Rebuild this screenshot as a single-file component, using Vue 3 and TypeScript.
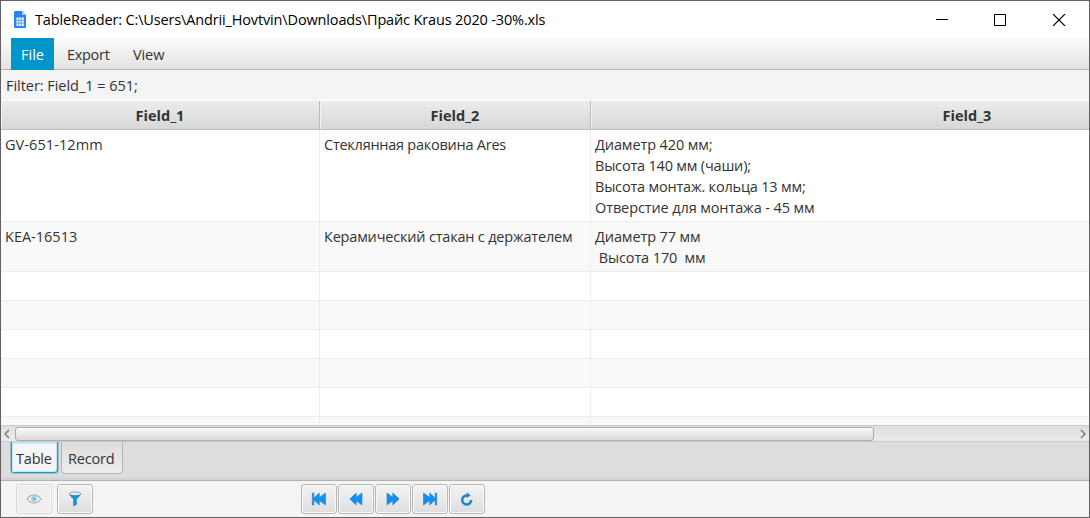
<script setup lang="ts">
interface Cell { lines: string[]; tracking: string[] }
interface Row { height: number; cells: Cell[] }

const columns = ['Field_1', 'Field_2', 'Field_3']
const cell = (lines: string[] = [], tracking: string[] = []): Cell => ({ lines, tracking })

const rows: Row[] = [
  {
    height: 92,
    cells: [
      cell(['GV-651-12mm'], ['loose']),
      cell(['Стеклянная раковина Ares'], ['tightest']),
      cell(
        ['Диаметр 420 мм;', 'Высота 140 мм (чаши);', 'Высота монтаж. кольца 13 мм;', 'Отверстие для монтажа - 45 мм'],
        ['tight', 'tighter', 'tighter', 'tight'],
      ),
    ],
  },
  {
    height: 50,
    cells: [
      cell(['KEA-16513'], ['']),
      cell(['Керамический стакан с держателем'], ['tighter']),
      cell(['Диаметр 77 мм', ' Высота 170  мм'], ['tight', 'tight']),
    ],
  },
  ...Array.from({ length: 6 }, () => ({ height: 29, cells: [cell(), cell(), cell()] })),
]

const navigation = ['first', 'previous', 'next', 'last', 'reload']
</script>

<template>
  <div class="window">
    <header class="titlebar">
      <svg class="doc" width="12" height="17" viewBox="0 0 12 17">
        <path d="M1.2 0H8L12 4V15.8Q12 17 10.8 17H1.2Q0 17 0 15.8V1.2Q0 0 1.2 0Z" fill="#2684f8" />
        <path d="M8 0L12 4H8Z" fill="#a9cdfb" />
        <path d="M2.5 6.5H9.8V15H2.5Z" fill="#fff" />
        <path d="M2.5 9.3H9.8M2.5 12.1H9.8M4.8 6.5V15M7.3 6.5V15" stroke="#2684f8" stroke-width=".7" />
      </svg>
      <span class="title">TableReader: C:\Users\Andrii_Hovtvin\Downloads\Прайс Kraus 2020 -30%.xls</span>
      <svg class="controls" width="130" height="12" viewBox="0 0 130 12" fill="none" stroke="#000">
        <path d="M0 5.5H12" />
        <path d="M58.5.5H69.5V11.5H58.5Z" />
        <path d="M117 0L129 12M129 0L117 12" stroke-width="1.1" />
      </svg>
    </header>

    <nav class="menubar">
      <span class="menu active">File</span>
      <span class="menu export">Export</span>
      <span class="menu view">View</span>
    </nav>
    <div class="filter"><span>Filter: Field_1 = 651;</span></div>

    <section class="table">
      <div class="grid head">
        <div v-for="name in columns" :key="name" class="th"><span>{{ name }}</span></div>
      </div>
      <div v-for="(row, r) in rows" :key="r" class="grid row" :style="{ height: row.height + 'px' }">
        <div v-for="(c, i) in row.cells" :key="i" class="td">
          <div v-for="(line, l) in c.lines" :key="l" class="line"><span :class="c.tracking[l]">{{ line }}</span></div>
        </div>
      </div>
    </section>

    <div class="scrollbar">
      <svg width="14" height="16" viewBox="0 0 14 16"><path d="M8 4L4 8L8 12" fill="none" stroke="#777" stroke-width="1.4" /></svg>
      <div class="thumb"></div>
      <svg class="right" width="14" height="16" viewBox="0 0 14 16"><path d="M6 4L10 8L6 12" fill="none" stroke="#777" stroke-width="1.4" /></svg>
    </div>

    <div class="tabs">
      <div class="tab selected"><span>Table</span></div>
      <div class="tab"><span>Record</span></div>
    </div>

    <footer class="toolbar">
      <button class="tool disabled">
        <svg width="16" height="12" viewBox="0 0 16 12">
          <path d="M1 6Q4 2 8 2T15 6Q12 10 8 10T1 6Z" fill="#f4f4f4" stroke="#a3a9ad" stroke-width="1.1" />
          <circle cx="8" cy="5.8" r="3.1" fill="#9fd0ef" /><circle cx="8" cy="5.8" r="1.1" fill="#68b4e4" />
        </svg>
      </button>
      <button class="tool funnel">
        <svg width="14" height="16" viewBox="0 0 14 16">
          <path d="M1 3L5.2 8V15.3L8.8 13.8V8L13 3Z" fill="#1492e6" />
          <ellipse cx="7" cy="2.8" rx="6" ry="1.8" fill="#e8eef1" stroke="#71868f" stroke-width=".7" />
          <path d="M1.2 3.4Q7 6 12.8 3.4L10 7H4Z" fill="#1492e6" />
        </svg>
      </button>
      <div class="navigation">
        <button v-for="kind in navigation" :key="kind" class="tool">
          <svg width="16" height="14" viewBox="0 0 16 14" fill="#0c93f3" stroke="#2b7fbd" stroke-width=".6">
            <path v-if="kind === 'first'" d="M1.3 1H2.9V6L8.3 1V5.4L14.5 1V13L8.3 8.6V13L2.9 8V13H1.3Z" />
            <path v-else-if="kind === 'previous'" d="M1.8 7L8.2 1V5.3L14 1V13L8.2 8.7V13Z" />
            <path v-else-if="kind === 'next'" d="M14.2 7L7.8 1V5.3L2 1V13L7.8 8.7V13Z" />
            <path v-else-if="kind === 'last'" d="M14.7 1H13.1V6L7.7 1V5.4L1.5 1V13L7.7 8.6V13L13.1 8V13H14.7Z" />
            <template v-else>
              <path d="M8.2 3.5A4.5 4.5 0 1 0 12.2 8" fill="none" stroke="#1b86d6" stroke-width="2.5" />
              <path d="M7.8 .2L11.6 3.2L7.8 6Z" fill="#1b86d6" stroke="none" />
            </template>
          </svg>
        </button>
      </div>
    </footer>
  </div>
</template>

<style>
body { margin: 0; overflow: hidden; }
</style>

<style scoped>
* { box-sizing: border-box; }
.window { width: 1090px; height: 518px; overflow: hidden; display: flex; flex-direction: column; border: 1px solid #626264; background: #f4f4f4; color: #333; font: 14.5px/21px "Open Sans", "Noto Sans", sans-serif; white-space: pre; }
.titlebar { height: 37px; flex: none; display: flex; align-items: center; padding-left: 13px; background: #fff; color: #000; }
.title { margin-left: 9px; letter-spacing: -.145px; }
.controls { margin-left: auto; margin-right: 23px; }
.menubar { height: 32px; flex: none; display: flex; padding-left: 10px; background: linear-gradient(#fbfbfb, #e3e3e3); border-bottom: 1px solid #b5b5b5; }
.menu { height: 32px; padding: 6px 0 0 10px; letter-spacing: -.3px; }
.menu.active { width: 43px; background: #0096c9; color: #fff; letter-spacing: 0; }
.export { margin-left: 3px; width: 66px; }
.menu.view { letter-spacing: -.1px; }
.filter { height: 30px; flex: none; padding: 5px 0 0 5px; letter-spacing: -.04px; }
.table { height: 325px; flex: none; overflow: hidden; background: #fff; }
.grid { display: grid; grid-template-columns: 319px 271px 753px; }
.head { height: 30px; background: linear-gradient(#ececec, #d7d7d7); border-top: 1px solid #fff; border-bottom: 1px solid #bcbcbc; font-weight: 700; }
.th { text-align: center; padding-top: 4px; border-right: 1px solid #bcbcbc; box-shadow: inset 1px 0 #f3f3f3; }
.row:nth-child(odd) { background: #f9f9f9; }
.td { padding: 4px 0 0 4px; border-right: 1px solid #ededed; border-bottom: 1px solid #ededed; }
.line { height: 21px; }
.loose { letter-spacing: .08px; }
.tight { letter-spacing: -.11px; }
.tighter { letter-spacing: -.19px; }
.tightest { letter-spacing: -.25px; }
.scrollbar { height: 17px; flex: none; display: flex; align-items: center; border: solid #cacaca; border-width: 1px 0; background: linear-gradient(#dedede, #ececec); }
.thumb { width: 859px; height: 14px; border: 1px solid #acacac; border-radius: 3px; background: linear-gradient(#f8f8f8, #dadada); box-shadow: inset 0 1px #fff; }
.right { margin-left: auto; }
.tabs { height: 39px; flex: none; display: flex; gap: 2px; padding-left: 9px; background: #ddd; border-bottom: 1px solid #b2b2b2; box-shadow: inset 0 -2px 2px #d2d2d2; }
.tab { width: 62px; height: 32px; padding: 6px 0 0 6px; border: 1px solid #b5b5b5; border-top: 0; border-radius: 0 0 4px 4px; background: linear-gradient(#dedede, #ececec); letter-spacing: -.2px; }
.tab.selected { width: 49px; padding-left: 5px; border: 1px solid #9dbcc7; border-top: 0; background: #f4f4f4; box-shadow: inset 1px 0 #1f9cc2, inset -1px -1px #1f9cc2, inset 0 0 0 2px #c5e8f2; }
.toolbar { height: 35px; flex: none; display: flex; padding: 3px 0 0 15px; }
.tool { width: 36px; height: 30px; padding: 0; display: grid; place-items: center; border: 1px solid #b7b7b7; border-radius: 3px; background: linear-gradient(#f3f3f3, #dedede); box-shadow: inset 0 0 0 1px #f8f8f8; }
.disabled { border-color: #d9d9d9; background: #efefef; }
.funnel { margin-left: 5px; }
.navigation { display: flex; gap: 1px; margin-left: 208px; }
</style>
